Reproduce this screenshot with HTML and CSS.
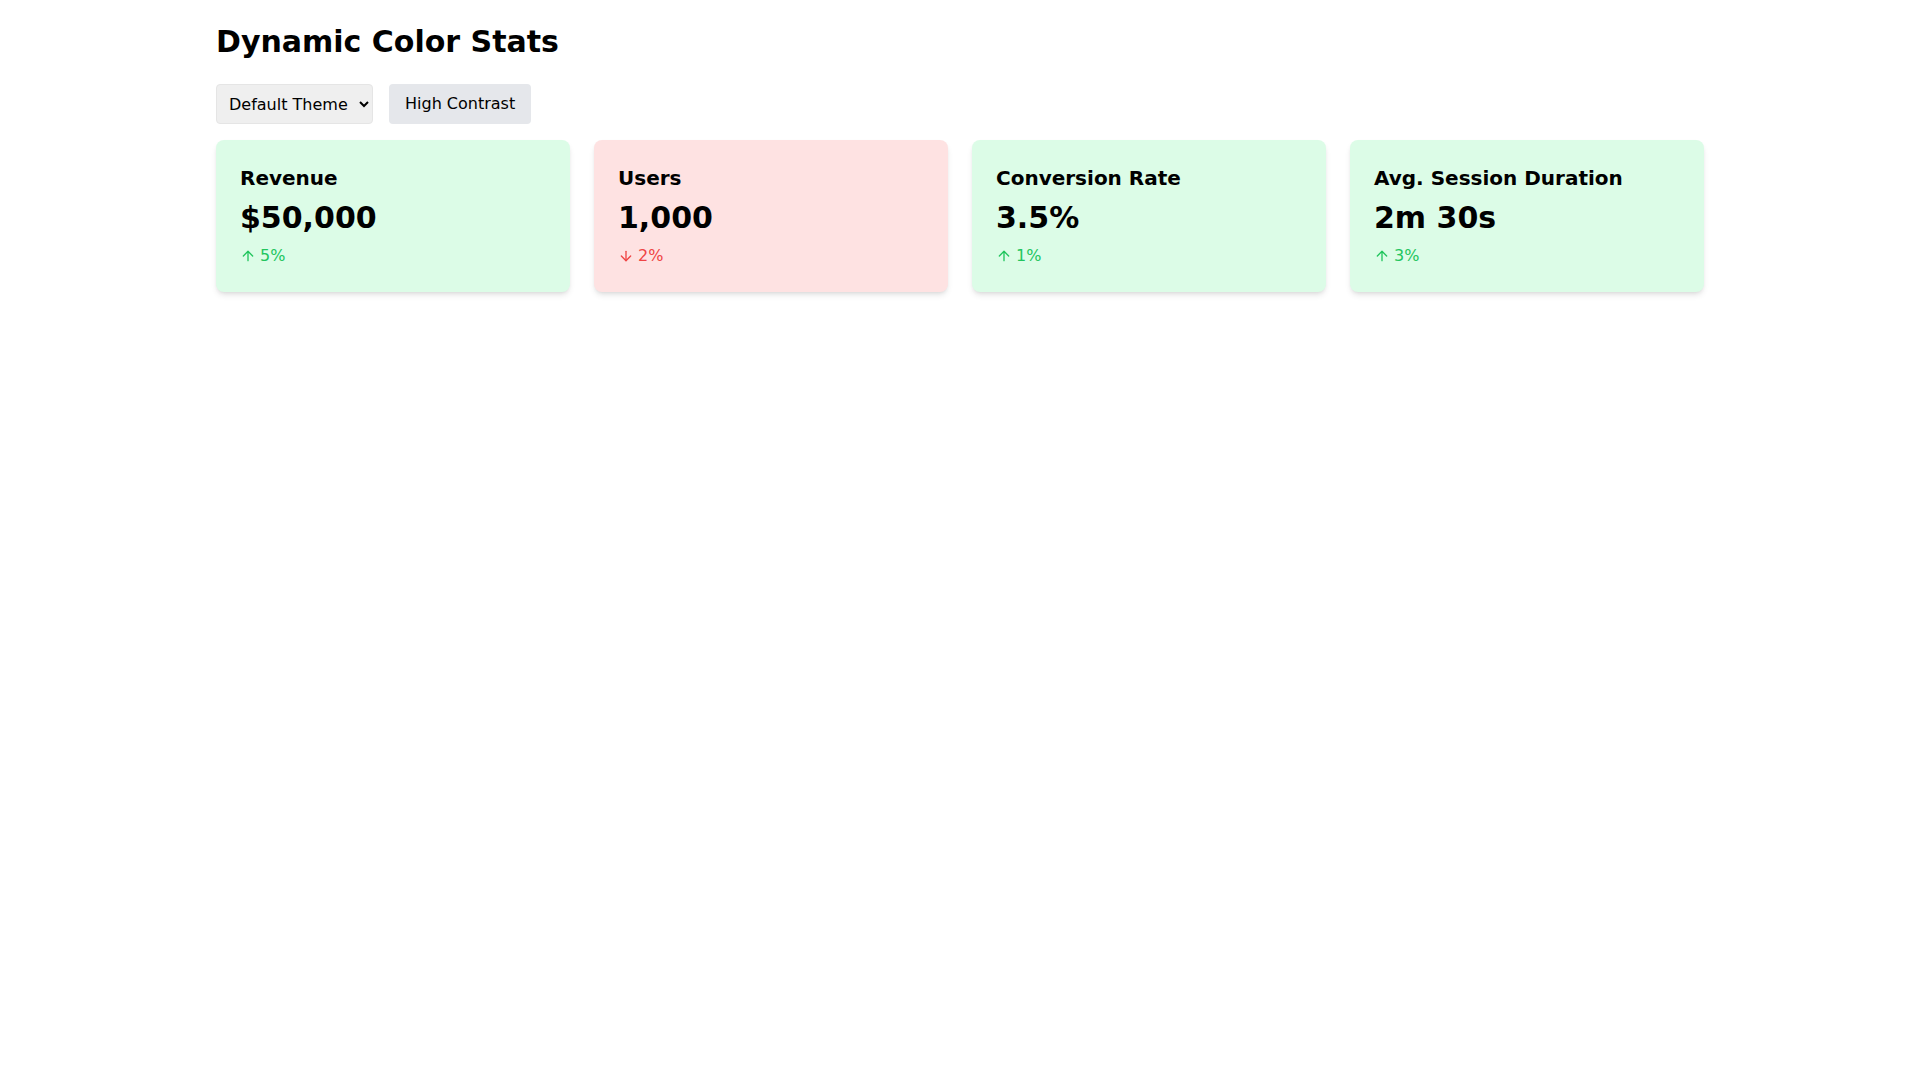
FILE: index.html
```html
<!DOCTYPE html>
<html lang="en">
<head>
<meta charset="utf-8">
<title>Dynamic Color Stats</title>
<link rel="stylesheet" href="styles.css">
</head>
<body>
<div class="container">
  <h1 class="page-title">Dynamic Color Stats</h1>
  <div class="controls">
    <select class="theme-select">
      <option>Default Theme</option>
      <option>Dark Theme</option>
    </select>
    <button class="contrast-btn" type="button">High Contrast</button>
  </div>
  <div class="stats-grid">
    <div class="stat-card positive">
      <h2 class="stat-title">Revenue</h2>
      <p class="stat-value">$50,000</p>
      <div class="stat-change up">
        <svg class="arrow" viewBox="0 0 24 24" fill="none" stroke="currentColor" stroke-width="2" stroke-linecap="round" stroke-linejoin="round"><path d="m5 12 7-7 7 7"/><path d="M12 19V5"/></svg>
        <span>5%</span>
      </div>
    </div>
    <div class="stat-card negative">
      <h2 class="stat-title">Users</h2>
      <p class="stat-value">1,000</p>
      <div class="stat-change down">
        <svg class="arrow" viewBox="0 0 24 24" fill="none" stroke="currentColor" stroke-width="2" stroke-linecap="round" stroke-linejoin="round"><path d="M12 5v14"/><path d="m19 12-7 7-7-7"/></svg>
        <span>2%</span>
      </div>
    </div>
    <div class="stat-card positive">
      <h2 class="stat-title">Conversion Rate</h2>
      <p class="stat-value">3.5%</p>
      <div class="stat-change up">
        <svg class="arrow" viewBox="0 0 24 24" fill="none" stroke="currentColor" stroke-width="2" stroke-linecap="round" stroke-linejoin="round"><path d="m5 12 7-7 7 7"/><path d="M12 19V5"/></svg>
        <span>1%</span>
      </div>
    </div>
    <div class="stat-card positive">
      <h2 class="stat-title">Avg. Session Duration</h2>
      <p class="stat-value">2m 30s</p>
      <div class="stat-change up">
        <svg class="arrow" viewBox="0 0 24 24" fill="none" stroke="currentColor" stroke-width="2" stroke-linecap="round" stroke-linejoin="round"><path d="m5 12 7-7 7 7"/><path d="M12 19V5"/></svg>
        <span>3%</span>
      </div>
    </div>
  </div>
</div>
</body>
</html>
```

FILE: styles.css
```css
* { box-sizing: border-box; }
html, body {
  margin: 0;
  padding: 0;
  background: #ffffff;
  font-family: "DejaVu Sans", sans-serif;
  color: #000;
}
.container {
  max-width: 1536px;
  margin: 0 auto;
  padding: 24px;
}
.page-title {
  margin: 0 0 24px 0;
  font-size: 30px;
  line-height: 36px;
  font-weight: 700;
}
.controls {
  display: flex;
  gap: 16px;
  margin-bottom: 16px;
}
.theme-select {
  font: inherit;
  font-size: 16px;
  line-height: 24px;
  padding: 7px 8px;
  border: 1px solid #e5e5e5;
  border-radius: 4px;
  background-color: #efefef;
  color: #000;
  height: 40px;
}
.contrast-btn {
  font: inherit;
  font-size: 16px;
  line-height: 24px;
  padding: 8px 16px;
  border: none;
  border-radius: 4px;
  background: #e5e7eb;
  color: #000;
}
.stats-grid {
  display: grid;
  grid-template-columns: repeat(4, 1fr);
  gap: 24px;
}
.stat-card {
  padding: 24px;
  border-radius: 8px;
  box-shadow: 0 4px 6px -1px rgba(0,0,0,0.1), 0 2px 4px -2px rgba(0,0,0,0.1);
}
.stat-card.positive { background: #dcfce7; }
.stat-card.negative { background: #fee2e2; }
.stat-title {
  margin: 0 0 8px 0;
  font-size: 20px;
  line-height: 28px;
  font-weight: 700;
}
.stat-value {
  margin: 0 0 8px 0;
  font-size: 30px;
  line-height: 36px;
  font-weight: 700;
}
.stat-change {
  display: flex;
  align-items: center;
  font-size: 16px;
  line-height: 24px;
}
.stat-change.up { color: #22c55e; }
.stat-change.down { color: #ef4444; }
.arrow {
  width: 16px;
  height: 16px;
  margin-right: 4px;
  flex: none;
}
```
